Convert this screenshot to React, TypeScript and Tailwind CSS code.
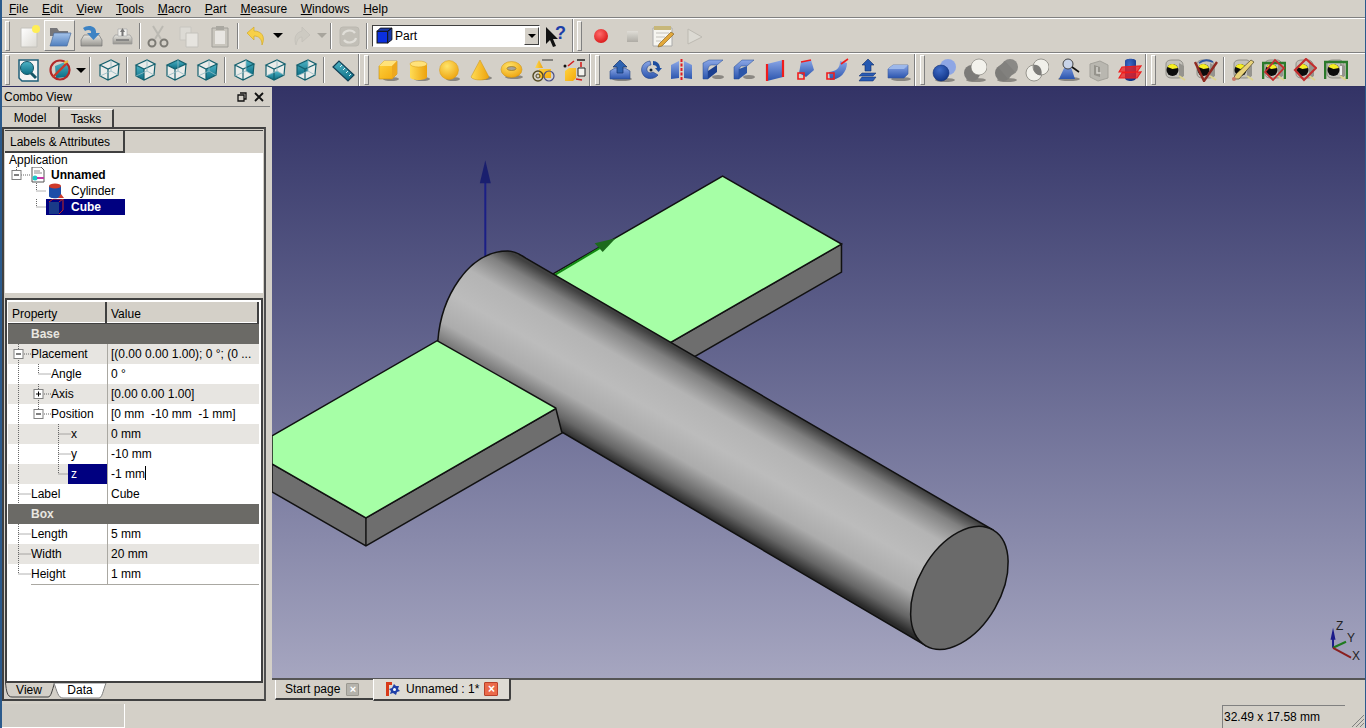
import React from "react";

const font = "font-['Liberation_Sans',Arial,sans-serif]";

// ---- toolbar icons, all drawn on a 24x24 box ----
const Cube = ({ face }: { face?: string }) => {
  const faces: Record<string, string> = {
    left: "3,7 11,11 11,22 3,18",
    top: "3,7 14,2 22,6 11,11",
    right: "11,11 22,6 21,17 11,22",
    rear: "14,2 22,6 21,17 14,13",
    bottom: "3,18 14,13 21,17 11,22",
    side: "3,7 14,2 14,13 3,18",
  };
  return (
    <>
      <polygon points="3,7 14,2 22,6 21,17 11,22 3,18" fill="#f4f8f8" opacity="0.7" />
      {face && <polygon points={faces[face]} fill="url(#teal)" />}
      <path d="M3 7 14 2 22 6 11 11ZM3 7V18L11 22 21 17 22 6M11 11V22" fill="none" stroke="#14606e" strokeWidth="1.2" />
      <path d="M14 2V13L3 18M14 13 21 17" fill="none" stroke="#8fb8c0" strokeWidth="0.8" />
    </>
  );
};

const Shadow = ({ x = 14, y = 21, r = 9 }) => <ellipse cx={x} cy={y} rx={r} ry="2" fill="#000" opacity="0.35" />;

const Gauge = ({ children }: { children?: React.ReactNode }) => (
  <>
    <path d="M3 6C3 3 6 2 9 2H16C19 3 20 5 20 7V17C20 19 18 20 15 20H8C5 20 3 18 3 16Z" fill="#c4c2bb" stroke="#77756f" strokeWidth="0.7" />
    <path d="M16 5 21 8V18L16 20Z" fill="#96948e" />
    <circle cx="9.500" cy="12" r="6" fill="#0c0c0c" />
    <path d="M4.500 9C6 5 13 5 15 10L9.500 11Z" fill="#f6ee22" />
    <path d="M16 18 22 22" stroke="#ddd48e" strokeWidth="2" />
    {children}
  </>
);

const icons: Record<string, React.ReactNode> = {
  new: (
    <>
      <path d="M4 4H20V23H4Z" fill="url(#paper)" stroke="#c4c2bc" />
      <circle cx="19" cy="5" r="4" fill="#ffee55" />
    </>
  ),
  open: (
    <>
      <path d="M2 20V4H9L11 7H20V12H2Z" fill="#77777a" />
      <path d="M6 9H23L19 22H2Z" fill="url(#folder)" stroke="#4a6f9f" strokeWidth="0.7" />
    </>
  ),
  save: (
    <>
      <path d="M2 16 5 11H20L23 16V22H2Z" fill="url(#metal)" stroke="#777" strokeWidth="0.7" />
      <path d="M4 4C9 0 18 2 17 9H21L14.500 16 8 9H12C13 6 9 5 6 7Z" fill="#3d83c4" />
    </>
  ),
  print: (
    <>
      <path d="M3 14 5 11H20L22 14V20H3Z" fill="url(#metal)" stroke="#999" strokeWidth="0.7" />
      <path d="M8 5H17V12H8Z" fill="#f2f1ee" stroke="#aaa" strokeWidth="0.7" />
      <path d="M12.500 4 15 8H10ZM11.500 8H13.500V12H11.500Z" fill="#777" />
      <path d="M6 16H19" stroke="#777" strokeWidth="1.500" />
    </>
  ),
  cut: (
    <>
      <path d="M9 15 17 2M15 15 7 2" stroke="#bbb9b2" strokeWidth="2" />
      <circle cx="6" cy="19" r="3.500" fill="none" stroke="#7c7a74" strokeWidth="2" />
      <circle cx="18" cy="19" r="3.500" fill="none" stroke="#7c7a74" strokeWidth="2" />
    </>
  ),
  copy: (
    <>
      <path d="M3 3H14V16H3Z" fill="#dcdad4" stroke="#c8c6c0" />
      <path d="M9 9H21V23H9Z" fill="#e6e4df" stroke="#c4c2bc" />
    </>
  ),
  paste: (
    <>
      <path d="M4 4H20V23H4Z" fill="#c8c5bd" stroke="#a09e98" />
      <path d="M7 7H17V20H7Z" fill="#e8e6e2" />
      <path d="M8 2H16V6H8Z" fill="#aaa8a1" />
    </>
  ),
  undo: <path d="M3 9 10 3V7C17 7 22 12 18 21 18 15 15 12 10 12V16Z" fill="#f7d048" stroke="#d3ab2a" strokeWidth="0.7" />,
  redo: <path d="M21 11 13 3V7C8 8 4 13 7 21 8 16 10 13 13 13V18Z" fill="#cdcac2" stroke="#c2bfb7" strokeWidth="0.7" />,
  refresh: (
    <>
      <rect x="3" y="3" width="19" height="19" rx="3" fill="#c2bfb7" stroke="#bbb8b0" />
      <path d="M6 11C7 6 15 5 18 9M19 14C18 19 10 20 7 16" fill="none" stroke="#e0ded8" strokeWidth="2.200" />
    </>
  ),
  whatsthis: (
    <>
      <path d="M2 3V20L6 16 9 23 12 22 9 15H14Z" fill="#111" />
      <text x="11" y="15" fontSize="18" fontWeight="700" fill="#1d3fa8" fontFamily="Liberation Sans">?</text>
    </>
  ),
  rec: <circle cx="12" cy="12" r="7" fill="url(#red)" />,
  stop: <rect x="7" y="7" width="11" height="11" fill="url(#metal)" opacity="0.6" />,
  edit: (
    <>
      <path d="M2 4H21V22H2Z" fill="#f6f5f0" stroke="#aaa" />
      <path d="M3 2H20V6H3Z" fill="#c7b77a" />
      <path d="M5 9H18M5 13H14M5 17H10" stroke="#c4c2bc" />
      <path d="M8 20 20 8 23 10 11 22 7 23Z" fill="#e3a83a" stroke="#7a5a1c" strokeWidth="0.6" />
    </>
  ),
  play: <path d="M6 5 20 13 6 20Z" fill="#dcdad3" stroke="#bdbab2" />,
  fit: (
    <>
      <path d="M2 2H21V23H5L2 20Z" fill="#f4f4f4" stroke="#1f5f78" strokeWidth="1.500" />
      <circle cx="10" cy="10" r="6.500" fill="url(#teal)" stroke="#145566" />
      <path d="M14 15 19 20" stroke="#145566" strokeWidth="3" />
    </>
  ),
  drawstyle: (
    <>
      <path d="M7 8 17 4 21 10 20 19 8 20Z" fill="url(#teal)" />
      <circle cx="12" cy="12" r="9.500" fill="none" stroke="#b02a2a" strokeWidth="2.200" />
      <path d="M5 19 19 5" stroke="#c83a2a" strokeWidth="2.400" />
      <path d="M16 5 20 3" stroke="#e8c040" strokeWidth="2" />
    </>
  ),
  measure: (
    <>
      <path d="M2 9 8 3 23 17 17 23Z" fill="url(#teal)" stroke="#123f56" strokeWidth="1.200" />
      <path d="M9 9 11 7M12 12 14 10M15 15 17 13M18 18 20 16" stroke="#e2f2f4" />
    </>
  ),
  box: (
    <>
      <Shadow x={15} y={21} r={8} />
      <path d="M3 8 8 3H21V16L16 21H3Z" fill="url(#gold)" stroke="#c08a10" strokeWidth="0.6" />
      <path d="M3 8H16L21 3H8Z" fill="#ffe27a" />
      <path d="M16 8V21L21 16V3Z" fill="#eda81e" />
    </>
  ),
  cylinder: (
    <>
      <Shadow x={15} y={21} r={8} />
      <path d="M3 6V19C3 23 20 23 20 19V6Z" fill="url(#goldh)" />
      <ellipse cx="11.500" cy="6" rx="8.500" ry="3" fill="#ffe27a" stroke="#d79c18" strokeWidth="0.5" />
    </>
  ),
  sphere: (
    <>
      <Shadow x={15} y={21} r={7} />
      <circle cx="11" cy="12" r="9.500" fill="url(#goldr)" stroke="#d79c18" strokeWidth="0.5" />
    </>
  ),
  cone: (
    <>
      <Shadow x={15} y={20} r={8} />
      <path d="M11 2 2 19C4 23 18 23 20 19Z" fill="url(#goldh)" stroke="#c99214" strokeWidth="0.5" />
    </>
  ),
  torus: (
    <>
      <Shadow x={14} y={19} r={9} />
      <ellipse cx="11.500" cy="11.500" rx="10.500" ry="8" fill="url(#goldr)" stroke="#c99214" strokeWidth="0.5" />
      <ellipse cx="11.500" cy="10.500" rx="4.500" ry="2" fill="#a6a39a" stroke="#9c7312" strokeWidth="0.7" />
    </>
  ),
  primitives: (
    <>
      <path d="M8 2 4 10H12Z" fill="url(#goldh)" />
      <path d="M11 2H22" stroke="#333" />
      <path d="M8 11H20V20H8Z" fill="url(#gold)" />
      <circle cx="7" cy="18" r="5" fill="none" stroke="#554a22" strokeWidth="1.400" />
      <circle cx="7" cy="18" r="2" fill="none" stroke="#554a22" />
      <circle cx="18" cy="18" r="5" fill="none" stroke="#4a4f86" strokeWidth="1.200" />
    </>
  ),
  shape: (
    <>
      <path d="M3 13 7 10H14V20L11 23H3Z" fill="url(#gold)" />
      <path d="M15 2H23" stroke="#222" strokeWidth="1.500" />
      <path d="M16 10H23V18H16Z" fill="#f3f2ee" stroke="#222" />
      <path d="M6 8 12 3" stroke="#d42020" strokeWidth="1.600" />
      <path d="M19 4V9M20 22 14 21" stroke="#d42020" strokeWidth="1.600" />
      <circle cx="3" cy="8" r="1.500" fill="#111" />
    </>
  ),
  extrude: (
    <>
      <Shadow x={14} y={21} r={10} />
      <path d="M2 13 7 10H17L22 13V21H2Z" fill="url(#blue)" stroke="#284a8a" strokeWidth="0.6" />
      <path d="M12 2 19 9H15V15H9V9H5Z" fill="#2d62b0" stroke="#12306c" strokeWidth="0.7" />
    </>
  ),
  revolve: (
    <>
      <path d="M11 3C3 4 0 12 5 18 9 22 16 21 19 17L14 14C11 16 7 14 8 10 9 8 10 7 12 7Z" fill="url(#blue)" stroke="#1f3f86" strokeWidth="0.6" />
      <path d="M14 3C18 3 21 6 21 10L23 10 19.500 14 16 10 18 10C18 8 16 7 14 7Z" fill="#1d4ea0" />
      <circle cx="12" cy="12" r="1.500" fill="#123" />
    </>
  ),
  mirror: (
    <>
      <path d="M1 7 9 3V20L1 21Z" fill="url(#blue)" />
      <path d="M14 3 22 7V21L14 20Z" fill="url(#blue)" />
      <path d="M11.500 1V23" stroke="#e01b24" strokeWidth="2" strokeDasharray="3 1.500" />
    </>
  ),
  fillet: (
    <>
      <Shadow x={17} y={19} r={6} />
      <path d="M2 5 8 2H22L16 7H10C7 8 7 11 7 13V21H2Z" fill="url(#blue)" stroke="#234a92" strokeWidth="0.5" />
      <path d="M7 21V13L16 7V14" fill="#1b3f90" />
    </>
  ),
  chamfer: (
    <>
      <Shadow x={17} y={19} r={6} />
      <path d="M2 9 10 2H22L15 8H9L7 11V21H2Z" fill="url(#blue)" stroke="#234a92" strokeWidth="0.5" />
      <path d="M7 21V11L15 8V15Z" fill="#2b55a8" />
    </>
  ),
  ruled: (
    <>
      <path d="M4 6 20 2V19L4 23Z" fill="url(#blue)" />
      <path d="M4 6V23M20 2V19" stroke="#f01c1c" strokeWidth="2.200" />
    </>
  ),
  loft: (
    <>
      <path d="M7 4 17 2 20 12 12 19 5 15Z" fill="url(#blue)" />
      <path d="M7 4 17 2" stroke="#f01c1c" strokeWidth="1.600" />
      <path d="M4 15H10V21H4Z" fill="none" stroke="#f01c1c" strokeWidth="1.600" />
    </>
  ),
  sweep: (
    <>
      <path d="M15 3C15 10 12 13 4 14L5 22C15 22 22 14 22 5Z" fill="url(#blue)" />
      <path d="M16 6 23 1" stroke="#f01c1c" strokeWidth="1.600" />
      <path d="M2 15H9V21H2Z" fill="none" stroke="#f01c1c" strokeWidth="1.600" />
    </>
  ),
  offset: (
    <>
      <path d="M12 1 18 7H15V13H9V7H6Z" fill="#2458b0" stroke="#0f2b68" strokeWidth="0.6" />
      <path d="M6 15H20L17 18H3ZM6 19H20L17 23H3Z" fill="#2a5cb5" stroke="#0f2b68" strokeWidth="0.5" />
    </>
  ),
  thickness: (
    <>
      <Shadow x={14} y={21} r={10} />
      <path d="M1 11 6 7H21V16L17 20H1Z" fill="url(#blue)" stroke="#3a5ca0" strokeWidth="0.6" />
      <path d="M1 11H17L21 7H6Z" fill="#9db8ea" />
    </>
  ),
  union: (
    <>
      <Shadow x={13} y={22} r={10} />
      <circle cx="16" cy="9" r="8" fill="#8ea6e4" />
      <circle cx="9" cy="15" r="8" fill="url(#blueR)" stroke="#0d2a70" strokeWidth="0.5" />
    </>
  ),
  cutb: (
    <>
      <Shadow x={13} y={22} r={10} />
      <circle cx="9" cy="15" r="8" fill="#7c7b78" />
      <circle cx="16" cy="9" r="8" fill="#f3f2ec" stroke="#77756f" strokeWidth="0.6" />
    </>
  ),
  fuse: (
    <>
      <Shadow x={13} y={22} r={10} />
      <circle cx="9" cy="15" r="8" fill="#7c7b78" />
      <circle cx="16" cy="9" r="8" fill="#8a8986" />
      <path d="M4 9 11 3 21 14 14 21Z" fill="#82817e" />
    </>
  ),
  common: (
    <>
      <circle cx="9" cy="15" r="8" fill="#f1f0ea" stroke="#77756f" strokeWidth="0.7" />
      <circle cx="16" cy="9" r="8" fill="#f1f0ea" stroke="#77756f" strokeWidth="0.7" />
      <path d="M8.500 7C14 6 17.500 11 16.500 17 11 18 7.500 13 8.500 7Z" fill="#7c7b78" />
    </>
  ),
  check: (
    <>
      <Shadow x={13} y={21} r={11} />
      <path d="M10 6 3 21H19L14 6Z" fill="url(#blue)" />
      <circle cx="12" cy="6" r="5" fill="#c9d4e8" stroke="#444" />
      <path d="M16 9 23 14" stroke="#111" strokeWidth="1.600" />
    </>
  ),
  section: (
    <>
      <path d="M3 6 13 3 21 7V20L11 23 3 19Z" fill="#b9b7b0" stroke="#a3a19a" />
      <path d="M7 7V17L13 19V9Z" fill="#95938c" />
      <path d="M10 9V15H14" fill="none" stroke="#d8d6d0" strokeWidth="1.500" />
    </>
  ),
  crossSections: (
    <>
      <path d="M7 3C7 0 18 0 18 3V20C18 24 7 24 7 20Z" fill="url(#blueR)" />
      <path d="M4 9 23 8 19 14H1ZM4 15 23 14 19 20H1Z" fill="#f01c1c" opacity="0.75" />
      <path d="M4 9 23 8 19 14H1ZM4 15 23 14 19 20H1Z" fill="none" stroke="#f01c1c" strokeWidth="1.200" />
    </>
  ),
  gauge: <Gauge />,
  gaugeCheck: (
    <Gauge>
      <path d="M1 4 10 23 23 4" fill="none" stroke="#8f2a22" strokeWidth="2.400" />
      <path d="M5 5C10 1 15 2 19 4" fill="none" stroke="#2c55a0" strokeWidth="1.800" />
    </Gauge>
  ),
  gaugePencil: (
    <Gauge>
      <path d="M2 21 5 16 20 2 23 4 8 21Z" fill="#e8d27a" stroke="#4d4424" strokeWidth="0.7" />
      <circle cx="3" cy="21" r="2" fill="#c87a6a" />
    </Gauge>
  ),
  gaugeGreen: (
    <Gauge>
      <path d="M1 21V5H23V21" fill="none" stroke="#2b7a2b" strokeWidth="2.600" />
      <path d="M3 14 13 2 22 10 11 22Z" fill="none" stroke="#c22e2e" strokeWidth="1.800" />
    </Gauge>
  ),
  gaugeRed: (
    <Gauge>
      <path d="M2 12 13 1 23 10 11 22Z" fill="none" stroke="#c22e2e" strokeWidth="2.200" />
    </Gauge>
  ),
  gaugeBars: (
    <Gauge>
      <path d="M1 21V4H23V21" fill="none" stroke="#2b7a2b" strokeWidth="2.600" />
      <path d="M17 8V17" stroke="#eee" strokeWidth="2" />
    </Gauge>
  ),
};

const Tool = ({ icon, face, active }: { icon?: string; face?: string; active?: boolean }) => (
  <div className={`flex h-[31px] w-[31px] shrink-0 items-center justify-center ${active ? "border border-t-white border-l-white border-r-[#808080] border-b-[#808080] bg-[#dedbd4]" : ""}`}>
    <svg viewBox="0 0 24 24" className="h-[24px] w-[24px]">
      {icon ? icons[icon] : <Cube face={face} />}
    </svg>
  </div>
);

const Arrow = ({ dim, w = "w-[12px]" }: { dim?: boolean; w?: string }) => (
  <div className={`flex shrink-0 justify-center ${w}`}>
    <div className={`h-0 w-0 border-x-[5px] border-t-[5px] border-x-transparent ${dim ? "border-t-[#a8a59d]" : "border-t-black"}`} />
  </div>
);

const Sep = ({ w = "w-[5px]" }: { w?: string }) => (
  <div className={`flex h-[26px] shrink-0 justify-center ${w}`}>
    <div className="w-[2px] border-l border-l-[#808080] border-r border-r-white" />
  </div>
);

const Handle = ({ w }: { w: string }) => (
  <div className={`flex h-[30px] shrink-0 justify-center ${w}`}>
    <div className="w-[5px] border border-[#808080] border-l-white border-t-white bg-[#dedbd4]" />
  </div>
);

const End = () => <div className="h-full w-[2px] shrink-0 border-l border-l-[#808080] border-r border-r-white" />;

// ---- left dock: model tree ----
const TreeRow = ({ gutter, w, icon, iconClass, textClass, text, bold, selected }: { gutter: React.ReactNode; w: string; icon: React.ReactNode; iconClass: string; textClass: string; text: string; bold?: boolean; selected?: boolean }) => (
  <div className="flex h-[16px] items-center">
    <svg className={`h-[16px] shrink-0 ${w}`}>{gutter}</svg>
    <div className={`flex h-[16px] items-center ${selected ? "bg-[#000080] text-white" : ""} ${bold ? "font-bold" : ""}`}>
      <svg viewBox="0 0 16 16" className={`h-[16px] w-[16px] shrink-0 ${iconClass}`}>
        {icon}
      </svg>
      <span className={`${textClass} ${selected ? "w-[54px]" : ""}`}>{text}</span>
    </div>
  </div>
);

const Expander = ({ x, y, plus }: { x: number; y: number; plus?: boolean }) => (
  <>
    <rect x={x - 4.5} y={y - 4.5} width="9" height="9" fill="#fff" stroke="#808080" />
    <path d={`M${x - 2.5} ${y}H${x + 2.5}${plus ? `M${x} ${y - 2.5}V${y + 2.5}` : ""}`} stroke="#000" />
  </>
);

// ---- left dock: property rows ----
const dotted = { stroke: "#666", strokeDasharray: "1 1", fill: "none" };
const rows = [
  { t: "Placement", v: "[(0.00 0.00 1.00); 0 °; (0 ...", g: 23, alt: true, d: "M10.500 0V20M14 10H23", box: { x: 10.5 } },
  { t: "Angle", v: "0 °", g: 43, d: "M10.500 0V20M30.500 0V10M30.500 10H43" },
  { t: "Axis", v: "[0.00 0.00 1.00]", g: 43, alt: true, d: "M10.500 0V20M30.500 0V20M34 10H43", box: { x: 30.5, plus: true } },
  { t: "Position", v: "[0 mm  -10 mm  -1 mm]", g: 43, d: "M10.500 0V20M30.500 0V6M34 10H43", box: { x: 30.5 } },
  { t: "x", v: "0 mm", g: 63, alt: true, d: "M10.500 0V20M50.500 0V20M50.500 10H63" },
  { t: "y", v: "-10 mm", g: 63, d: "M10.500 0V20M50.500 0V20M50.500 10H63" },
  { t: "z", v: "-1 mm", g: 60, alt: true, d: "M10.500 0V20M50.500 0V10M50.500 10H60", editing: true },
  { t: "Label", v: "Cube", g: 23, d: "M10.500 0V20M10.500 10H23" },
];
const boxRows = [
  { t: "Length", v: "5 mm", g: 23, d: "M10.500 0V20M10.500 10H23" },
  { t: "Width", v: "20 mm", g: 23, alt: true, d: "M10.500 0V20M10.500 10H23" },
  { t: "Height", v: "1 mm", g: 23, d: "M10.500 0V10M10.500 10H23" },
];

const PropRow = ({ r }: { r: any }) => (
  <div className={`grid h-[20px] w-[251px] grid-cols-[99px_152px] ${r.alt ? "bg-[#e7e5e1]" : "bg-white"}`}>
    <div className="flex">
      <svg className="h-[20px] shrink-0" style={{ width: r.g }}>
        <path d={r.d} {...dotted} />
        {r.box && <Expander x={r.box.x} y={10} plus={r.box.plus} />}
      </svg>
      <div className={`flex-1 border-b border-[#aaa8a2] leading-[20px] ${r.editing ? "bg-[#000080] pl-[3px] text-white" : ""}`}>{r.t}</div>
    </div>
    <div className={`truncate whitespace-pre border-l border-b border-[#aaa8a2] pl-[3px] leading-[20px] ${r.editing ? "bg-white" : ""}`}>
      {r.v}
      {r.editing && <span className="inline-block h-[14px] w-px translate-y-[2px] bg-black" />}
    </div>
  </div>
);

const Band = ({ t }: { t: string }) => (
  <div className="h-[20px] w-[251px] bg-[#6b6a66] pl-[23px] font-bold leading-[20px] text-[#e8e6e0]">{t}</div>
);

const Viewport = () => (
  <svg viewBox="272 87 1094 591" className="h-full w-full">
    <defs>
      <linearGradient id="cyl" gradientUnits="userSpaceOnUse" x1="750" y1="390.700" x2="685" y2="503.700">
        <stop offset="0" stopColor="#404040" />
        <stop offset="0.1" stopColor="#808080" />
        <stop offset="0.27" stopColor="#b4b4b4" />
        <stop offset="0.5" stopColor="#bcbcbc" />
        <stop offset="0.72" stopColor="#acacac" />
        <stop offset="0.9" stopColor="#666" />
        <stop offset="1" stopColor="#2a2a2a" />
      </linearGradient>
    </defs>
    <path d="M272 464 366 518 842 244V272L366 546 272 492Z" fill="#6e6e6e" stroke="#111" strokeWidth="1.500" />
    <path d="M272 436 723 176 842 244 366 518 272 464Z" fill="#a6ffa6" stroke="#111" strokeWidth="1.500" />
    <path d="M366 518V546" stroke="#111" strokeWidth="1.500" />
    <path d="M485.500 258V180" stroke="#1b1f86" strokeWidth="2" />
    <path d="M485.500 160 491 183H480Z" fill="#1a1f6e" />
    <path d="M553 276 600 248" stroke="#138a13" strokeWidth="2" />
    <path d="M616 238 603 252 595 243Z" fill="#1c6a1c" />
    <path d="M438 341C441 298 468 251 508 251 514 251 520 254 526 258L993.500 530 926.500 646 562 432 556 408Z" fill="url(#cyl)" stroke="#111" strokeWidth="1.500" />
    <ellipse cx="960" cy="588" rx="67" ry="41" transform="rotate(-60 960 588)" fill="#6a6a6a" stroke="#111" strokeWidth="1.500" />
    <path d="M1334 648V636" stroke="#1a1a8a" strokeWidth="2" />
    <path d="M1334 628 1336.500 640H1331.500Z" fill="#1a1a8a" />
    <path d="M1334 648 1347 642" stroke="#1f7a1f" strokeWidth="2" />
    <path d="M1334 648 1352 658" stroke="#8a1f1f" strokeWidth="2" />
    <text x="1337" y="630" fontSize="12" fill="#222" fontFamily="Liberation Sans">Z</text>
    <text x="1348" y="642" fontSize="12" fill="#222" fontFamily="Liberation Sans">Y</text>
    <text x="1353" y="660" fontSize="12" fill="#222" fontFamily="Liberation Sans">X</text>
  </svg>
);

const menus = ["File", "Edit", "View", "Tools", "Macro", "Part", "Measure", "Windows", "Help"];

export default function App() {
  return (
    <div className={`flex h-[728px] w-[1366px] flex-col overflow-hidden border-l-2 border-r border-[#2b5a8c] bg-[#d4d0c8] text-[12px] text-black ${font}`}>
      <svg className="absolute h-0 w-0">
        <defs>
          <linearGradient id="teal" x1="0" y1="0" x2="0" y2="1"><stop offset="0" stopColor="#4fb4c6" /><stop offset="1" stopColor="#0b6d84" /></linearGradient>
          <linearGradient id="paper" x1="0" y1="0" x2="1" y2="1"><stop offset="0" stopColor="#fff" /><stop offset="1" stopColor="#dcdad4" /></linearGradient>
          <linearGradient id="folder" x1="0" y1="0" x2="0" y2="1"><stop offset="0" stopColor="#a6c4ea" /><stop offset="1" stopColor="#4f7fbe" /></linearGradient>
          <linearGradient id="metal" x1="0" y1="0" x2="0" y2="1"><stop offset="0" stopColor="#e6e5e0" /><stop offset="1" stopColor="#96948e" /></linearGradient>
          <linearGradient id="gold" x1="0" y1="0" x2="1" y2="1"><stop offset="0" stopColor="#ffd23e" /><stop offset="1" stopColor="#f3a90d" /></linearGradient>
          <linearGradient id="goldh" x1="0" y1="0" x2="1" y2="0"><stop offset="0" stopColor="#ffdc55" /><stop offset="1" stopColor="#eda20c" /></linearGradient>
          <radialGradient id="goldr" cx="0.4" cy="0.3" r="0.8"><stop offset="0" stopColor="#ffe46a" /><stop offset="1" stopColor="#ec9e08" /></radialGradient>
          <linearGradient id="blue" x1="0" y1="0" x2="0" y2="1"><stop offset="0" stopColor="#8aa6e6" /><stop offset="1" stopColor="#2b55ae" /></linearGradient>
          <radialGradient id="blueR" cx="0.4" cy="0.3" r="0.8"><stop offset="0" stopColor="#3f6cc8" /><stop offset="1" stopColor="#0d2f80" /></radialGradient>
          <radialGradient id="red" cx="0.4" cy="0.35" r="0.7"><stop offset="0" stopColor="#ff6a6a" /><stop offset="1" stopColor="#d81818" /></radialGradient>
        </defs>
      </svg>

      {/* menu bar */}
      <div className="flex h-[18px] shrink-0 items-center gap-[13.7px] border-b border-[#808080] pl-[7px]">
        {menus.map((m) => (
          <span key={m}>
            <u>{m[0]}</u>
            {m.slice(1)}
          </span>
        ))}
      </div>

      {/* first toolbar row */}
      <div className="flex h-[35px] shrink-0 items-center border-t border-t-white border-b border-b-[#808080]">
        <Handle w="w-[11px]" />
        <Tool icon="new" />
        <Tool icon="open" active />
        <Tool icon="save" />
        <Tool icon="print" />
        <Sep />
        <Tool icon="cut" />
        <Tool icon="copy" />
        <Tool icon="paste" />
        <Sep />
        <Tool icon="undo" />
        <Arrow w="w-[14px]" />
        <Tool icon="redo" />
        <Arrow dim />
        <Sep />
        <Tool icon="refresh" />
        <Sep />
        <div className="ml-[3px] flex h-[22px] w-[168px] shrink-0 items-center border border-t-[#404040] border-l-[#404040] border-r-white border-b-white bg-white pl-[3px]">
          <svg viewBox="0 0 16 16" className="h-[17px] w-[17px] shrink-0">
            <path d="M1 4H11V15H1Z" fill="#0b2fe0" stroke="#111" />
            <path d="M1 4 4 1H15L11 4ZM11 4V15L15 12V1Z" fill="#1c3aa8" stroke="#111" strokeWidth="0.8" />
          </svg>
          <span className="ml-[2px] flex-1">Part</span>
          <div className="flex h-[18px] w-[15px] items-center justify-center border border-t-white border-l-white border-r-[#404040] border-b-[#404040] bg-[#d4d0c8]">
            <div className="h-0 w-0 border-x-[4px] border-t-[4px] border-x-transparent border-t-black" />
          </div>
        </div>
        <Tool icon="whatsthis" />
        <div className="ml-[1px] h-full"><End /></div>
        <Handle w="w-[11px]" />
        <Tool icon="rec" />
        <Tool icon="stop" />
        <Tool icon="edit" />
        <Tool icon="play" />
      </div>

      {/* second toolbar row */}
      <div className="flex h-[34px] shrink-0 items-center border-t border-t-white border-b border-b-[#303060]">
        <Handle w="w-[11px]" />
        <Tool icon="fit" />
        <Tool icon="drawstyle" />
        <Arrow />
        <Sep w="w-[6px]" />
        <Tool />
        <Sep />
        <Tool face="left" />
        <Tool face="top" />
        <Tool face="right" />
        <Sep w="w-[6px]" />
        <Tool face="rear" />
        <Tool face="bottom" />
        <Tool face="side" />
        <Sep w="w-[6px]" />
        <Tool icon="measure" />
        <End />
        <Handle w="w-[12px]" />
        {["box", "cylinder", "sphere", "cone", "torus", "primitives", "shape"].map((n) => (
          <Tool key={n} icon={n} />
        ))}
        <End />
        <Handle w="w-[13px]" />
        {["extrude", "revolve", "mirror", "fillet", "chamfer", "ruled", "loft", "sweep", "offset", "thickness"].map((n) => (
          <Tool key={n} icon={n} />
        ))}
        <End />
        <Handle w="w-[12px]" />
        {["union", "cutb", "fuse", "common", "check", "section", "crossSections"].map((n) => (
          <Tool key={n} icon={n} />
        ))}
        <End />
        <Handle w="w-[12px]" />
        <Tool icon="gauge" />
        <Tool icon="gaugeCheck" />
        <Sep w="w-[6px]" />
        <Tool icon="gaugePencil" />
        <Tool icon="gaugeGreen" />
        <Tool icon="gaugeRed" />
        <Tool icon="gaugeBars" />
      </div>

      {/* main area */}
      <div className="flex h-[615px] shrink-0">
        {/* combo view */}
        <div className="flex w-[268px] shrink-0 flex-col">
          <div className="flex h-[20px] shrink-0 items-center justify-between border-b border-[#808080] pl-[2px] pr-[5px]">
            <span>Combo View</span>
            <div className="flex items-center gap-[5px]">
              <svg viewBox="0 0 12 12" className="h-[12px] w-[12px]">
                <path d="M4 2H10V8H8M2 4H8V10H2Z" fill="none" stroke="#111" strokeWidth="1.300" />
              </svg>
              <svg viewBox="0 0 12 12" className="h-[12px] w-[12px]">
                <path d="M2 2 10 10M10 2 2 10" stroke="#111" strokeWidth="1.800" />
              </svg>
            </div>
          </div>
          <div className="mt-px flex h-[19px] shrink-0 items-end">
            <div className="flex h-[20px] w-[58px] items-center justify-center border-r-2 border-r-[#404040] pt-[2px]">Model</div>
            <div className="flex h-[18px] w-[54px] items-center justify-center border-r-2 border-t border-r-[#404040] border-t-white">Tasks</div>
          </div>
          <div className="flex h-[574px] w-[264px] flex-col border-2 border-[#404040] border-r-[#505050] pl-[1px] pr-[1px] pt-[1px]">
            {/* tree */}
            <div className="h-[163px] shrink-0 border-t border-[#404040] bg-white">
              <div className="flex h-[22px] bg-[#d4d0c8]">
                <div className="flex w-[120px] items-center border-r-2 border-b-2 border-r-[#404040] border-b-[#404040] pl-[5px] pt-[2px]">Labels &amp; Attributes</div>
              </div>
              <div className="h-[14px] pl-[4px] leading-[14px]">Application</div>
              <TreeRow
                w="w-[25px]"
                iconClass=""
                textClass="ml-[5px]"
                bold
                text="Unnamed"
                gutter={
                  <>
                    <path d="M11.500 0V4M16 8H25" {...dotted} />
                    <Expander x={11.5} y={8} />
                  </>
                }
                icon={
                  <>
                    <path d="M2 0H11L14 3V15H2Z" fill="#fff" stroke="#555" />
                    <path d="M4 4H10M4 6H12" stroke="#888" />
                    <circle cx="5" cy="11" r="2.500" fill="#1cc8c8" />
                    <path d="M7 10H14V12H7Z" fill="#c43ca8" />
                  </>
                }
              />
              <TreeRow
                w="w-[41px]"
                iconClass="ml-[2px]"
                textClass="ml-[7px]"
                text="Cylinder"
                gutter={<path d="M31.500 0V8M31.500 8H41" {...dotted} />}
                icon={
                  <>
                    <path d="M1 3V13C1 16 13 16 13 13V3Z" fill="#1d4ea8" />
                    <ellipse cx="7" cy="3" rx="6" ry="2.500" fill="#cf3a2a" />
                    <path d="M13 11 16 15H10Z" fill="#cf3a2a" />
                  </>
                }
              />
              <TreeRow
                w="w-[41px]"
                iconClass="ml-[2px]"
                textClass="ml-[7px]"
                text="Cube"
                bold
                selected
                gutter={<path d="M31.500 0V8M31.500 8H41" {...dotted} />}
                icon={
                  <>
                    <path d="M1 3H11V15H1Z" fill="#1a3a88" />
                    <path d="M1 3 5 0H15V11L11 15M11 3 15 0" fill="none" stroke="#c8281e" />
                  </>
                }
              />
            </div>
            <div className="h-[5px] shrink-0" />
            {/* property editor */}
            <div className="flex flex-1 flex-col border-2 border-b-0 border-[#404040] border-r-[#404040] bg-white pl-px pt-[2px]">
              <div className="grid h-[20px] w-[251px] shrink-0 grid-cols-[99px_152px] bg-[#d4d0c8]">
                <div className="flex items-center border-r-2 border-b-2 border-r-[#404040] border-b-[#404040] pl-[4px] pt-[3px]">Property</div>
                <div className="flex items-center border-r-2 border-b-2 border-r-[#404040] border-b-[#404040] pl-[4px] pt-[3px]">Value</div>
              </div>
              <div className="h-[2px]" />
              <Band t="Base" />
              {rows.map((r) => (
                <PropRow key={r.t} r={r} />
              ))}
              <Band t="Box" />
              {boxRows.map((r) => (
                <PropRow key={r.t} r={r} />
              ))}
            </div>
            {/* view / data tabs */}
            <div className="-mt-[1px] flex h-[18px] shrink-0 items-start border-t-2 border-[#404040]">
              <svg className="h-[17px] w-[102px] shrink-0">
                <path d="M0.500 0C1.500 8 2 14 7 14H43C46 14 47 8 49.500 0" fill="#d4d0c8" stroke="#404040" />
                <path d="M49 0C52 8 53 15 58 15H94C97 15 98 8 101 0Z" fill="#fff" stroke="#808080" />
                <text x="24" y="11" textAnchor="middle" fontSize="12" fontFamily="Liberation Sans" fill="#000">View</text>
                <text x="75" y="11" textAnchor="middle" fontSize="12" fontFamily="Liberation Sans" fill="#000">Data</text>
              </svg>
            </div>
          </div>
        </div>

        {/* 3d view and document tabs */}
        <div className="ml-[2px] flex min-w-0 flex-1 flex-col">
          <div className="h-[591px] shrink-0 bg-gradient-to-b from-[#333366] to-[#a6a6c0]">
            <Viewport />
          </div>
          <div className="flex h-[24px] shrink-0 items-start border-t-2 border-[#555] pl-[3px]">
            <div className="flex h-[20px] w-[98px] items-center border-l border-l-white border-b-2 border-b-[#404040] pl-[9px]">
              Start page
              <span className="ml-[6px] flex h-[13px] w-[13px] items-center justify-center rounded-[1px] border border-[#9a9890] bg-[#b5b3ac] text-[11px] font-bold leading-none text-white">×</span>
            </div>
            <div className="-mt-px flex h-[22px] w-[138px] items-center rounded-br-[3px] border-l border-l-white border-r-2 border-b-2 border-r-[#404040] border-b-[#404040] bg-[#dedbd4] pl-[12px]">
              <svg viewBox="0 0 14 14" className="h-[14px] w-[14px] shrink-0">
                <path d="M0 0H6V3H3V14H0Z" fill="#d83a1a" />
                <path d="M8 2 10 4 13 4 12 7 14 9 11 10 10 13 7 11 4 12 5 9 3 7 6 6Z" fill="#1f3fa8" />
                <circle cx="8.500" cy="7.500" r="1.500" fill="#fff" />
              </svg>
              <span className="ml-[6px]">Unnamed : 1*</span>
              <span className="ml-[5px] flex h-[14px] w-[14px] items-center justify-center rounded-[1px] border border-[#b8402a] bg-[#ea6a4a] text-[12px] font-bold leading-none text-white">×</span>
            </div>
          </div>
        </div>
      </div>

      {/* status bar */}
      <div className="flex min-h-0 flex-1 items-end justify-between">
        <div className="h-[24px] w-[123px] border-r border-b border-white bg-[#cfccc5]" />
        <div className="flex items-end">
          <div className="flex h-[23px] w-[123px] items-center border-l border-t border-[#808080] pl-[1px] leading-none">32.49 x 17.58 mm</div>
          <svg viewBox="0 0 20 20" className="h-[20px] w-[20px]">
            <path d="M19 7 7 19M19 11 11 19M19 15 15 19" stroke="#808080" />
          </svg>
        </div>
      </div>
    </div>
  );
}
